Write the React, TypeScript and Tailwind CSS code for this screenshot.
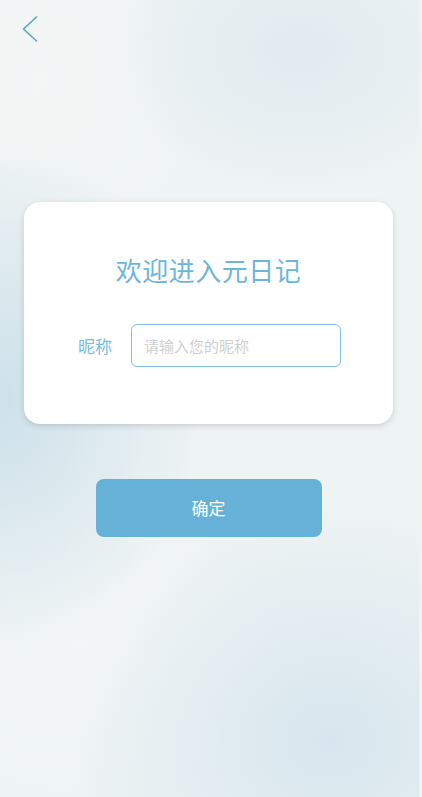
import { useState } from "react";

export default function App() {
  const [nickname, setNickname] = useState("");

  return (
    <div className="relative min-h-[797px] w-full overflow-hidden bg-[#eef3f4] font-['Noto_Sans_CJK_SC','Noto_Sans',sans-serif]">
      {/* soft background blobs */}
      <div className="pointer-events-none absolute inset-0 bg-[radial-gradient(ellipse_200px_260px_at_0px_400px,#cde1ea_0%,rgba(205,225,234,0)_100%),radial-gradient(ellipse_260px_230px_at_330px_740px,#d7e6ee_0%,rgba(215,230,238,0)_100%),radial-gradient(ellipse_190px_140px_at_300px_50px,#e0eaef_0%,rgba(224,234,239,0)_100%),radial-gradient(ellipse_160px_200px_at_40px_80px,#f3f6f5_0%,rgba(243,246,245,0)_100%),radial-gradient(ellipse_200px_160px_at_80px_640px,#f3f6f6_0%,rgba(243,246,246,0)_100%)]" />
      <div className="pointer-events-none absolute right-0 top-0 h-full w-[3px] bg-[#f1f2f2]" />

      <div className="relative flex flex-col">
        {/* header */}
        <div className="flex h-[60px] items-start px-[20px] pt-[15px]">
          <button className="flex h-[28px] w-[20px] items-center justify-center">
            <svg width="18" height="28" viewBox="0 0 18 28" fill="none">
              <path d="M15.5 2 L2.5 14 L15.5 26" stroke="#5ba6b6" strokeWidth="1.6" strokeLinecap="round" strokeLinejoin="round" />
            </svg>
          </button>
        </div>

        {/* card */}
        <div className="ml-[24px] mt-[142px] w-[369px] rounded-[16px] bg-white pb-[57px] pt-[50px] shadow-[0_2px_6px_rgba(0,0,0,0.14)]">
          <h1 className="text-center text-[26px] leading-[36px] tracking-[0.5px] text-[#6db6db]">欢迎进入元日记</h1>
          <div className="mt-[36px] flex items-center pl-[54px]">
            <span className="w-[53px] text-[17px] leading-[24px] text-[#78bde0]">昵称</span>
            <input
              value={nickname}
              onChange={(e) => setNickname(e.target.value)}
              placeholder="请输入您的昵称"
              className="h-[43px] w-[210px] rounded-[6px] border-[1.5px] border-[#80c1e2] bg-white px-[12px] text-[15px] text-[#555] outline-none placeholder:text-[#cfcfcf]"
            />
          </div>
        </div>

        {/* confirm */}
        <div className="ml-[24px] mt-[55px] flex w-[369px] justify-center">
          <button className="h-[58px] w-[226px] rounded-[8px] bg-[#66b1d8] text-[17px] text-white">确定</button>
        </div>
      </div>
    </div>
  );
}
